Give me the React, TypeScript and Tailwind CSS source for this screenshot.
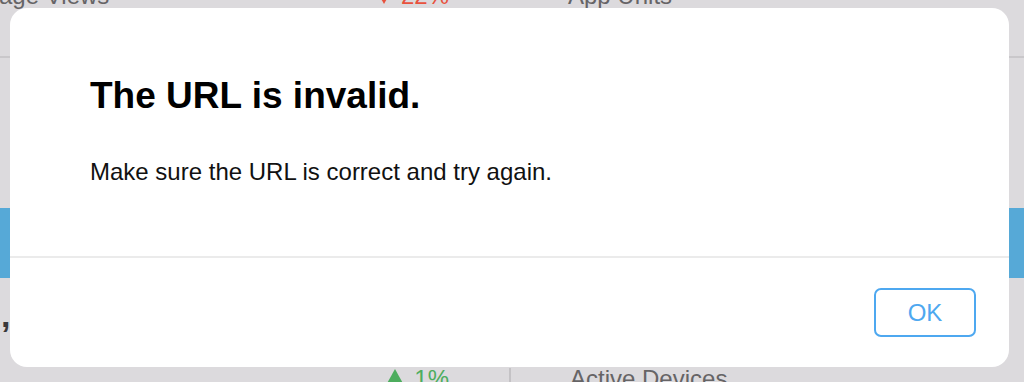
import React from "react";

const font = { fontFamily: '"Liberation Sans", Arial, Helvetica, sans-serif' };

function Backdrop() {
  return (
    <div className="text-[24px] font-light text-[#666466]">
      <div className="flex h-[56px] items-start">
        <div className="-mt-[18px] flex w-[509px] items-center justify-between pr-[60px] leading-[28px]">
          <span className="-ml-[17px]">Page Views</span>
          <span className="flex items-center text-[#e8513d]">
            <svg width="16" height="14" viewBox="0 0 16 14" className="mr-[9px] mt-[2px]">
              <path d="M0 0h16L8 14z" fill="#e8513d" />
            </svg>
            22%
          </span>
        </div>
        <div className="-mt-[18px] pl-[59px] leading-[28px]">App Units</div>
      </div>
      <div className="h-[2px] bg-[#c9c7ca]" />
      <div className="h-[150px]" />
      <div className="h-[70px] bg-[#56a9d7]" />
      <div className="flex h-[87px] items-end pb-[33px] pl-[1px] text-[34px] font-bold leading-none text-[#3a383a]">
        ,
      </div>
      <div className="flex">
        <div className="flex w-[509px] items-start justify-end pr-[60px] leading-[28px] text-[#4dad5e]">
          <svg width="20" height="18" viewBox="0 0 20 18" className="mr-[9px] mt-[4px]">
            <path d="M10 0l10 18H0z" fill="#4dad5e" />
          </svg>
          1%
        </div>
        <div className="mt-[3px] h-[40px] w-[2px] bg-[#c4c2c5]" />
        <div className="pl-[59px] leading-[28px]">Active Devices</div>
      </div>
    </div>
  );
}

function AlertDialog() {
  return (
    <div className="absolute left-[10px] top-[8px] flex h-[359px] w-[999px] flex-col rounded-[17px] bg-white">
      <div className="h-[248px] shrink-0 pl-[80px] pt-[69px]">
        <h1 className="text-[37px] font-bold leading-[37px] text-black">The URL is invalid.</h1>
        <p className="mt-[46px] text-[24px] leading-[24px] text-[#111]">
          Make sure the URL is correct and try again.
        </p>
      </div>
      <div className="h-[2px] shrink-0 bg-[#ebebeb]" />
      <div className="flex flex-1 items-center justify-end pr-[33px]">
        <button className="flex h-[49px] w-[102px] items-center justify-center rounded-[7px] border-2 border-[#4ea8f0] text-[24px] text-[#4ea8f0]">
          OK
        </button>
      </div>
    </div>
  );
}

export default function App() {
  return (
    <div className="relative h-[382px] w-[1024px] overflow-hidden bg-[#dcdadd]" style={font}>
      <Backdrop />
      <AlertDialog />
    </div>
  );
}
